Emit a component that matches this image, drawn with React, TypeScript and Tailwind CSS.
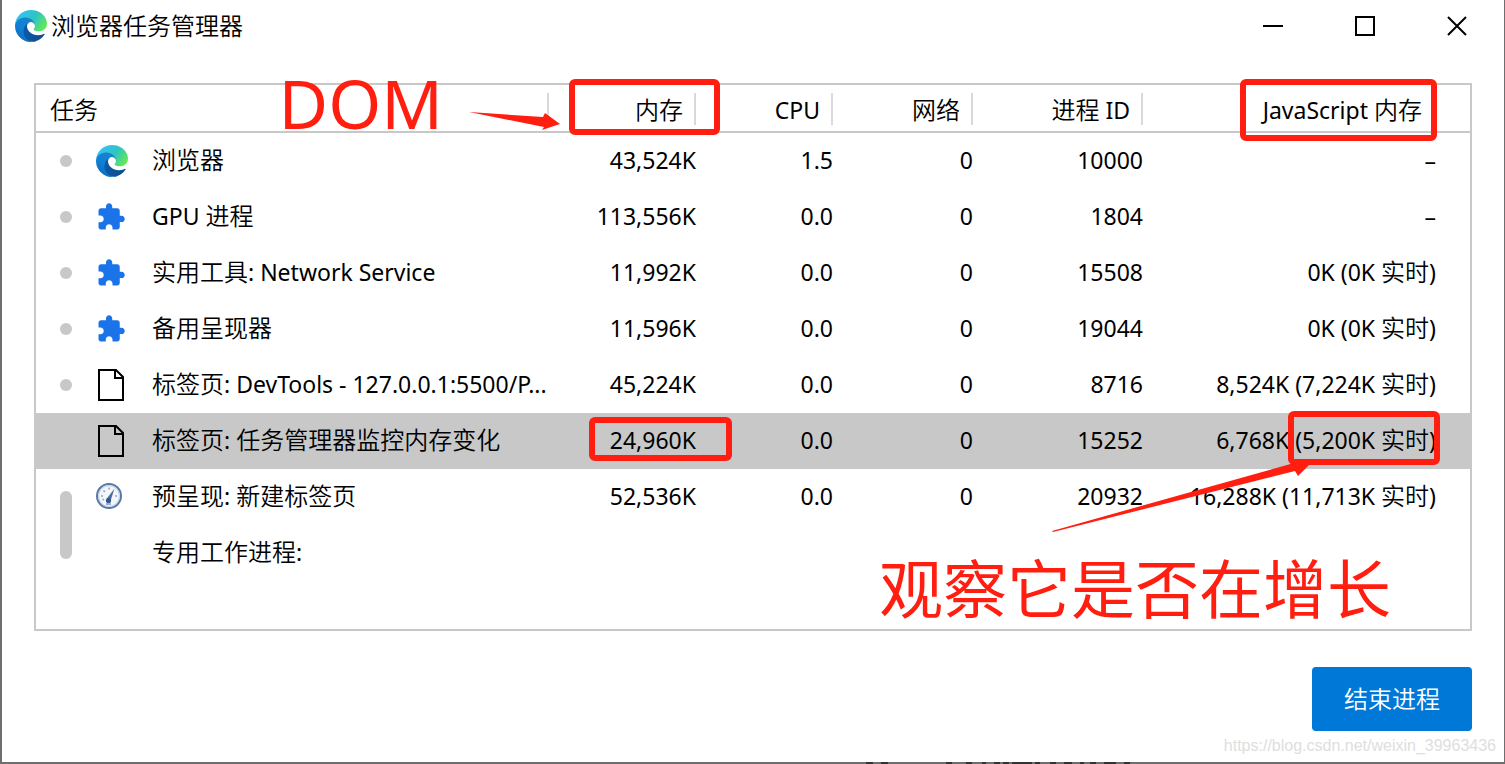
import type { ReactNode } from "react";

type Task = {
  name: string;
  icon?: "edge" | "puzzle" | "page" | "gauge";
  memory?: string;
  cpu?: string;
  network?: string;
  pid?: string;
  js?: string;
  selected?: boolean;
  group?: "start" | "rest";
};

const tasks: Task[] = [
  { name: "浏览器", icon: "edge", memory: "43,524K", cpu: "1.5", network: "0", pid: "10000", js: "–" },
  { name: "GPU 进程", icon: "puzzle", memory: "113,556K", cpu: "0.0", network: "0", pid: "1804", js: "–" },
  { name: "实用工具: Network Service", icon: "puzzle", memory: "11,992K", cpu: "0.0", network: "0", pid: "15508", js: "0K (0K 实时)" },
  { name: "备用呈现器", icon: "puzzle", memory: "11,596K", cpu: "0.0", network: "0", pid: "19044", js: "0K (0K 实时)" },
  { name: "标签页: DevTools - 127.0.0.1:5500/P...", icon: "page", memory: "45,224K", cpu: "0.0", network: "0", pid: "8716", js: "8,524K (7,224K 实时)" },
  { name: "标签页: 任务管理器监控内存变化", icon: "page", memory: "24,960K", cpu: "0.0", network: "0", pid: "15252", js: "6,768K (5,200K 实时)", selected: true },
  { name: "预呈现: 新建标签页", icon: "gauge", memory: "52,536K", cpu: "0.0", network: "0", pid: "20932", js: "16,288K (11,713K 实时)", group: "start" },
  { name: "专用工作进程:", group: "rest" },
];

// Latin runs are set a little smaller than the Chinese around them
function Mixed({ text }: { text: string }) {
  return (
    <>
      {text.split(/([\u4e00-\u9fff]+)/).map((part, i) =>
        i % 2 ? (
          <span key={i} className="text-[24px] font-[350]">{part}</span>
        ) : (
          part
        )
      )}
    </>
  );
}

function EdgeLogo({ id }: { id: string }) {
  return (
    <svg viewBox="0 0 256 256" className="h-8 w-8 shrink-0" aria-hidden="true">
      <defs>
        <linearGradient id={`${id}-dark`} x1="0.1" y1="0.5" x2="1" y2="0.6">
          <stop offset="0" stopColor="#0c59a4" />
          <stop offset="1" stopColor="#114a8b" />
        </linearGradient>
        <linearGradient id={`${id}-blue`} x1="0.8" y1="0.2" x2="0.3" y2="1">
          <stop offset="0" stopColor="#1783cc" />
          <stop offset="0.5" stopColor="#0f80d6" />
          <stop offset="1" stopColor="#0a6cc0" />
        </linearGradient>
        <linearGradient id={`${id}-green`} x1="0.1" y1="0.3" x2="1" y2="0.7">
          <stop offset="0" stopColor="#35c1f1" />
          <stop offset="0.5" stopColor="#2dc4c4" />
          <stop offset="1" stopColor="#66eb50" />
        </linearGradient>
      </defs>
      <path fill={`url(#${id}-dark)`} transform="translate(-4.63 -4.92)" d="M235.68 195.46a93.73 93.73 0 0 1-10.54 4.71 101.87 101.87 0 0 1-35.9 6.46c-47.32 0-88.54-32.55-88.54-74.32A31.48 31.48 0 0 1 117.13 105c-42.8 1.8-53.8 46.4-53.8 72.53 0 73.88 68.09 81.37 82.76 81.37 7.91 0 19.84-2.3 27-4.56l1.31-.44a128.34 128.34 0 0 0 66.6-52.8 4 4 0 0 0-5.32-5.64z" />
      <path fill={`url(#${id}-blue)`} transform="translate(-4.63 -4.92)" d="M110.34 246.34A79.2 79.2 0 0 1 87.6 225a80.72 80.72 0 0 1 29.53-120c3.12-1.47 8.45-4.13 15.54-4a32.35 32.35 0 0 1 25.69 13 31.88 31.88 0 0 1 6.36 18.66c0-.21 24.46-79.6-80-79.6-43.9 0-80 41.66-80 78.21a130.15 130.15 0 0 0 12.11 56 128 128 0 0 0 156.38 67.11 75.55 75.55 0 0 1-62.78-8z" />
      <path fill={`url(#${id}-green)`} d="M152.31 148.86c-.81 1.05-3.3 2.5-3.3 5.66 0 2.61 1.7 5.12 4.72 7.23 14.38 10 41.49 8.68 41.56 8.68a59.56 59.56 0 0 0 30.27-8.35A61.38 61.38 0 0 0 256 109.2c.26-22.41-8-37.31-11.34-43.91C223.46 23.84 177.72 0 128 0A128 128 0 0 0 0 126.2c.48-36.54 36.8-66.05 80-66.05 3.5 0 23.46.34 42 10.07 16.34 8.58 24.9 18.94 30.85 29.21 6.18 10.67 7.28 24.15 7.28 29.52s-2.89 13.42-7.82 19.91z" />
    </svg>
  );
}

function PuzzleIcon() {
  return (
    <svg viewBox="0 0 24 24" className="h-[30px] w-[30px]" fill="#1a73e8" aria-hidden="true">
      <path d="M20.5 11H19V7c0-1.1-.9-2-2-2h-4V3.5C13 2.12 11.88 1 10.5 1S8 2.12 8 3.5V5H4c-1.1 0-1.99.9-1.99 2v3.8H3.5c1.49 0 2.7 1.21 2.7 2.7s-1.21 2.7-2.7 2.7H2V20c0 1.1.9 2 2 2h3.8v-1.5c0-1.49 1.21-2.7 2.7-2.7 1.49 0 2.7 1.21 2.7 2.7V22H17c1.1 0 2-.9 2-2v-4h1.5c1.38 0 2.5-1.12 2.5-2.5S21.88 11 20.5 11z" />
    </svg>
  );
}

function PageIcon() {
  return (
    <svg viewBox="0 0 30 32" className="h-8 w-[30px]" fill="none" stroke="#000" strokeWidth="2" aria-hidden="true">
      <path d="M3 1H20L27 8V31H3Z" />
      <path d="M19 1V9H27" />
    </svg>
  );
}

function GaugeIcon() {
  return (
    <svg viewBox="0 0 28 28" className="h-7 w-7" aria-hidden="true">
      <circle cx="13" cy="13" r="12" fill="#f3f6fa" stroke="#5878a8" strokeWidth="2" />
      <circle cx="13" cy="13" r="10.4" fill="none" stroke="#c3cfe0" strokeWidth="1" />
      <path d="M5 13h2M19 13h2M7.5 7.5l1.4 1.4M13 4.5v2M6.5 17l1.5-.7" stroke="#8fa5c6" strokeWidth="1.6" />
      <path d="M18.5 5.5L10.5 16l4 2z" fill="#4a6a9c" />
      <circle cx="12.5" cy="17.5" r="2.6" fill="#34568c" />
      <path d="M10 21h5" stroke="#9db0cd" strokeWidth="2" />
    </svg>
  );
}

function TaskIcon({ icon }: { icon: Task["icon"] }) {
  if (icon === "edge") return <EdgeLogo id="row" />;
  if (icon === "puzzle") return <PuzzleIcon />;
  if (icon === "page") return <PageIcon />;
  if (icon === "gauge") return <GaugeIcon />;
  return null;
}

function Heading({ text, last, mark }: { text: string; last?: boolean; mark?: ReactNode }) {
  return (
    <th className={`relative pt-0.5 text-right font-normal ${last ? "pr-[48px]" : "pr-[13px]"}`}>
      <Mixed text={text} />
      {!last && <span className="absolute right-0 top-2 h-8 w-[2px] bg-[#d9d9d9]" />}
      {mark}
    </th>
  );
}

export default function App() {
  return (
    <div className="relative flex min-h-screen flex-col border-b-2 border-l-2 border-r border-[#6e6e6e] bg-white font-['Noto_Sans','Noto_Sans_CJK_SC',sans-serif] text-[23px] leading-8 text-black">
      <header className="flex items-center justify-between pl-[13px] pr-[37px] pt-[10px]">
        <div className="flex items-center gap-1">
          <EdgeLogo id="title" />
          <h1 className="text-[24px] font-[350]">浏览器任务管理器</h1>
        </div>
        <div className="flex items-center gap-[72px]">
          <button aria-label="最小化">
            <svg viewBox="0 0 20 20" className="h-5 w-5" stroke="#000" strokeWidth="2"><path d="M0 10H20" /></svg>
          </button>
          <button aria-label="最大化">
            <svg viewBox="0 0 20 20" className="h-5 w-5" fill="none" stroke="#000" strokeWidth="2"><path d="M1 1H19V19H1Z" /></svg>
          </button>
          <button aria-label="关闭">
            <svg viewBox="0 0 20 20" className="h-5 w-5" stroke="#000" strokeWidth="2"><path d="M1 1L19 19M19 1L1 19" /></svg>
          </button>
        </div>
      </header>

      <main className="relative mx-8 mt-[41px] min-h-[548px] border-2 border-[#c8c8c8]">
        <table className="w-full table-fixed border-collapse whitespace-nowrap text-right">
          <colgroup>
            <col className="w-[60px]" />
            <col className="w-[56px]" />
            <col />
            <col className="w-[147px]" />
            <col className="w-[137px]" />
            <col className="w-[140px]" />
            <col className="w-[170px]" />
            <col className="w-[327px]" />
          </colgroup>
          <thead>
            <tr className="h-12 shadow-[inset_0_-2px_0_#c8c8c8]">
              <th colSpan={3} className="relative pl-[14px] pt-0.5 text-left font-normal">
                <Mixed text="任务" />
                <span className="absolute right-0 top-2 h-8 w-[2px] bg-[#d9d9d9]" />
                <span className="absolute -top-4 right-[106px] text-[68px] leading-[68px] text-[#ff1e10]">DOM</span>
                <svg viewBox="0 0 92 20" className="absolute -right-3 top-[27px] h-5 w-[92px]" fill="#ff1e10" aria-hidden="true">
                  <path d="M0 0L74 5L76 1L91 12L73 18L75 15Z" />
                </svg>
              </th>
              <Heading text="内存" mark={<span className="absolute -bottom-0.5 -right-6 -top-1.5 left-5 rounded-md border-[6px] border-[#ff1e10]" />} />
              <Heading text="CPU" />
              <Heading text="网络" />
              <Heading text="进程 ID" />
              <Heading last text="JavaScript 内存" mark={<span className="absolute -bottom-2 -top-1.5 left-[97px] right-[33px] rounded-md border-[6px] border-[#ff1e10]" />} />
            </tr>
          </thead>
          <tbody>
            {tasks.map((task) => (
              <tr key={task.name} className={task.selected ? "h-14 bg-[#c8c8c8]" : "h-14"}>
                {task.group !== "rest" && (
                  <td rowSpan={task.group === "start" ? 2 : 1}>
                    <span className={`mx-auto block w-3 rounded-full bg-[#c8c8c8] ${task.group === "start" ? "h-[68px]" : "h-3"}`} />
                  </td>
                )}
                <td><TaskIcon icon={task.icon} /></td>
                <td className="pb-0.5 text-left"><Mixed text={task.name} /></td>
                <td className="relative pb-0.5">
                  {task.memory}
                  {task.selected && <span className="absolute -right-9 bottom-2 left-10 top-1 rounded-md border-[6px] border-[#ff1e10]" />}
                </td>
                <td className="pb-0.5">{task.cpu}</td>
                <td className="pb-0.5">{task.network}</td>
                <td className="pb-0.5">{task.pid}</td>
                <td className="relative pb-0.5 pr-[34px]">
                  <Mixed text={task.js ?? ""} />
                  {task.selected && <span className="absolute -top-0.5 bottom-1 right-[30px] w-[152px] rounded-md border-[6px] border-[#ff1e10]" />}
                </td>
              </tr>
            ))}
          </tbody>
        </table>

        <svg viewBox="0 0 262 70" className="absolute right-[156px] top-[377px] h-[70px] w-[262px]" fill="#ff1e10" aria-hidden="true">
          <path d="M0 69L242 1L240 -2H262L246 14L243 9L1 70Z" />
        </svg>
        <p className="absolute bottom-2 right-[79px] text-[64px] leading-[64px] text-[#ff1e10]">观察它是否在增长</p>
      </main>

      <footer className="flex justify-end px-8 pb-[31px] pt-9">
        <button className="h-16 w-40 rounded bg-[#0078d7] text-[24px] font-[350] text-white">结束进程</button>
      </footer>

      <a href="https://blog.csdn.net/weixin_39963436" className="absolute bottom-1 right-2 font-['Liberation_Sans',sans-serif] text-[16px] leading-6 text-[#dedede]">
        https://blog.csdn.net/weixin_39963436
      </a>

      {/* tops of the letters in the page behind the window */}
      <svg viewBox="0 0 264 2" className="absolute -bottom-0.5 right-[374px] h-0.5 w-[264px]" stroke="#333" strokeWidth="2" aria-hidden="true">
        <path d="M0 1H264" strokeDasharray="7 8 7 58 6 14 6 10 4 8 6 3 6 3 20 3 5 10 6 8 8 8 4 6 6 8 12 8 8 300" />
      </svg>
    </div>
  );
}
